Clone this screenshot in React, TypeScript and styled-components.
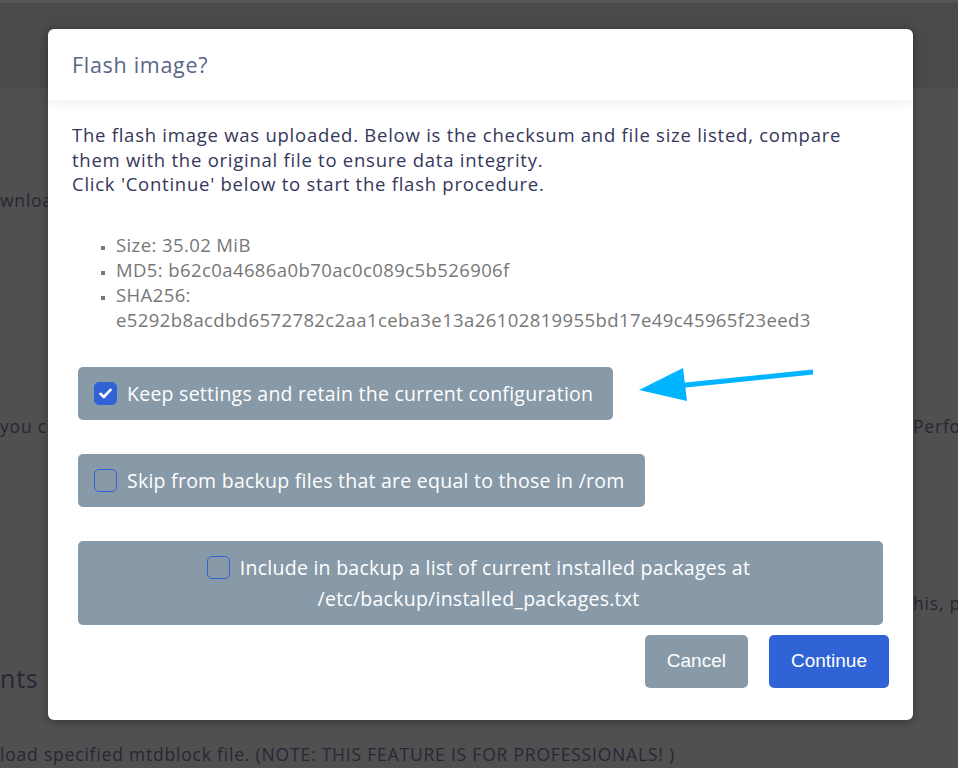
import React, { useState } from "react";
import styled, { createGlobalStyle } from "styled-components";

const GlobalStyle = createGlobalStyle`
  html, body {
    margin: 0;
    padding: 0;
    height: 100%;
    overflow: hidden;
  }
  body {
    background: #505050;
    font-family: "Open Sans", Lato, sans-serif;
  }
`;

const Page = styled.div`
  position: relative;
  width: 958px;
  height: 768px;
  overflow: hidden;
  background: #505050;
  color: #262836;
`;

const TopBar = styled.div`
  height: 88px;
  background: #4a4a4a;
  border-top: 3px solid #555;
  box-sizing: border-box;
`;

const PageBody = styled.div`
  display: flex;
  flex-direction: column;
  font-size: 17.5px;
  letter-spacing: 0.8px;
`;

const PageRow = styled.div<{ $top: number }>`
  display: grid;
  grid-template-columns: 48px 865px 45px;
  margin-top: ${(p) => p.$top}px;
  white-space: nowrap;
  & > span {
    overflow: hidden;
  }
`;

const PageHeading = styled.div`
  font-size: 25px;
  margin-top: 46px;
`;

const PageLine = styled.div`
  white-space: nowrap;
  margin-top: 47px;
`;

const Backdrop = styled.div`
  position: absolute;
  inset: 0;
  display: flex;
  justify-content: center;
  align-items: flex-start;
  padding-top: 29px;
`;

const Modal = styled.div`
  width: 865px;
  background: #fff;
  border-radius: 6px;
  box-shadow: 0 2px 8px rgba(0, 0, 0, 0.3);
  margin-left: 3px;
`;

const Header = styled.div`
  height: 71px;
  display: flex;
  align-items: center;
  padding: 0 24px;
  box-shadow: 0 4px 10px rgba(0, 0, 0, 0.06);
  position: relative;
`;

const Title = styled.h4`
  margin: 0;
  font-size: 21.5px;
  letter-spacing: 0.7px;
  font-weight: 400;
  color: #5b6586;
`;

const Body = styled.div`
  padding: 23px 24px 32px;
  color: #34375a;
  font-size: 18.5px;
  letter-spacing: 0.75px;
  line-height: 24.5px;
`;

const Para = styled.p`
  margin: 0;
`;

const List = styled.ul`
  margin: 35px 0 35px;
  padding-left: 44px;
  list-style: square;
  color: #777;
  line-height: 25px;
  letter-spacing: 0.4px;
  li::marker {
    font-size: 12px;
  }
`;

const Options = styled.div`
  display: flex;
  flex-direction: column;
  align-items: flex-start;
  gap: 34px;
  padding: 0 6px;
`;

const OptionBox = styled.label<{ $wide?: boolean }>`
  display: ${(p) => (p.$wide ? "block" : "inline-flex")};
  align-self: ${(p) => (p.$wide ? "stretch" : "flex-start")};
  align-items: center;
  text-align: ${(p) => (p.$wide ? "center" : "left")};
  gap: 10px;
  padding: 11px 20px 11px 16px;
  background: #8899a8;
  border-radius: 5px;
  color: #fff;
  font-size: 19.5px;
  letter-spacing: 0.25px;
  line-height: 31px;
  cursor: pointer;
`;

const Check = styled.span<{ $checked: boolean; $inline?: boolean }>`
  display: inline-flex;
  align-items: center;
  justify-content: center;
  width: 23px;
  height: 23px;
  box-sizing: border-box;
  border-radius: 5px;
  flex-shrink: 0;
  border: 1.5px solid #3263d6;
  background: ${(p) => (p.$checked ? "#3263d6" : "transparent")};
  vertical-align: ${(p) => (p.$inline ? "-4px" : "middle")};
  margin-right: ${(p) => (p.$inline ? "10px" : "0")};
`;

const Footer = styled.div`
  display: flex;
  justify-content: flex-end;
  gap: 21px;
  margin-top: 10px;
`;

const Button = styled.button<{ $primary?: boolean }>`
  height: 53px;
  padding: 0 22px;
  border: none;
  border-radius: 5px;
  background: ${(p) => (p.$primary ? "#2f63d6" : "#8899a8")};
  color: #fff;
  font-family: "Liberation Sans", Arial, sans-serif;
  font-size: 19px;
  cursor: pointer;
`;

const Arrow = styled.svg`
  position: absolute;
  left: 630px;
  top: 360px;
`;

const CheckMark = () => (
  <svg width="13" height="11" viewBox="0 0 13 11">
    <path
      d="M1.5 5.8 L4.8 9 L11.5 1.8"
      fill="none"
      stroke="#fff"
      strokeWidth="2.6"
      strokeLinecap="round"
      strokeLinejoin="round"
    />
  </svg>
);

const options = [
  { id: "keep", label: "Keep settings and retain the current configuration" },
  { id: "skip", label: "Skip from backup files that are equal to those in /rom" },
];

const App = () => {
  const [checked, setChecked] = useState<Record<string, boolean>>({
    keep: true,
    skip: false,
    pkgs: false,
  });
  const toggle = (id: string) => setChecked((c) => ({ ...c, [id]: !c[id] }));

  return (
    <Page>
      <GlobalStyle />
      <TopBar />
      <PageBody>
        <PageRow $top={100}>
          <span>wnloa</span>
        </PageRow>
        <PageRow $top={202}>
          <span>you co</span>
          <span />
          <span>Perfo</span>
        </PageRow>
        <PageRow $top={153}>
          <span />
          <span />
          <span>his, p</span>
        </PageRow>
        <PageHeading>nts</PageHeading>
        <PageLine>load specified mtdblock file. (NOTE: THIS FEATURE IS FOR PROFESSIONALS! )</PageLine>
      </PageBody>

      <Backdrop>
        <Modal>
          <Header>
            <Title>Flash image?</Title>
          </Header>
          <Body>
            <Para>
              The flash image was uploaded. Below is the checksum and file size listed, compare
              them with the original file to ensure data integrity.
              <br />
              Click 'Continue' below to start the flash procedure.
            </Para>
            <List>
              <li>Size: 35.02 MiB</li>
              <li>MD5: b62c0a4686a0b70ac0c089c5b526906f</li>
              <li>
                SHA256:
                <br />
                e5292b8acdbd6572782c2aa1ceba3e13a26102819955bd17e49c45965f23eed3
              </li>
            </List>
            <Options>
              {options.map((o) => (
                <OptionBox key={o.id} onClick={() => toggle(o.id)}>
                  <Check $checked={checked[o.id]}>{checked[o.id] && <CheckMark />}</Check>
                  {o.label}
                </OptionBox>
              ))}
              <OptionBox $wide onClick={() => toggle("pkgs")}>
                <Check $checked={checked.pkgs} $inline>
                  {checked.pkgs && <CheckMark />}
                </Check>
                Include in backup a list of current installed packages at
                <br />
                /etc/backup/installed_packages.txt
              </OptionBox>
            </Options>
            <Footer>
              <Button>Cancel</Button>
              <Button $primary>Continue</Button>
            </Footer>
          </Body>
        </Modal>
      </Backdrop>

      <Arrow width="190" height="50" viewBox="630 360 190 50">
        <line x1="813" y1="372" x2="676" y2="386" stroke="#00b4ff" strokeWidth="5" />
        <polygon points="639,390 683,368 687,401" fill="#00b4ff" />
      </Arrow>
    </Page>
  );
};

export default App;
